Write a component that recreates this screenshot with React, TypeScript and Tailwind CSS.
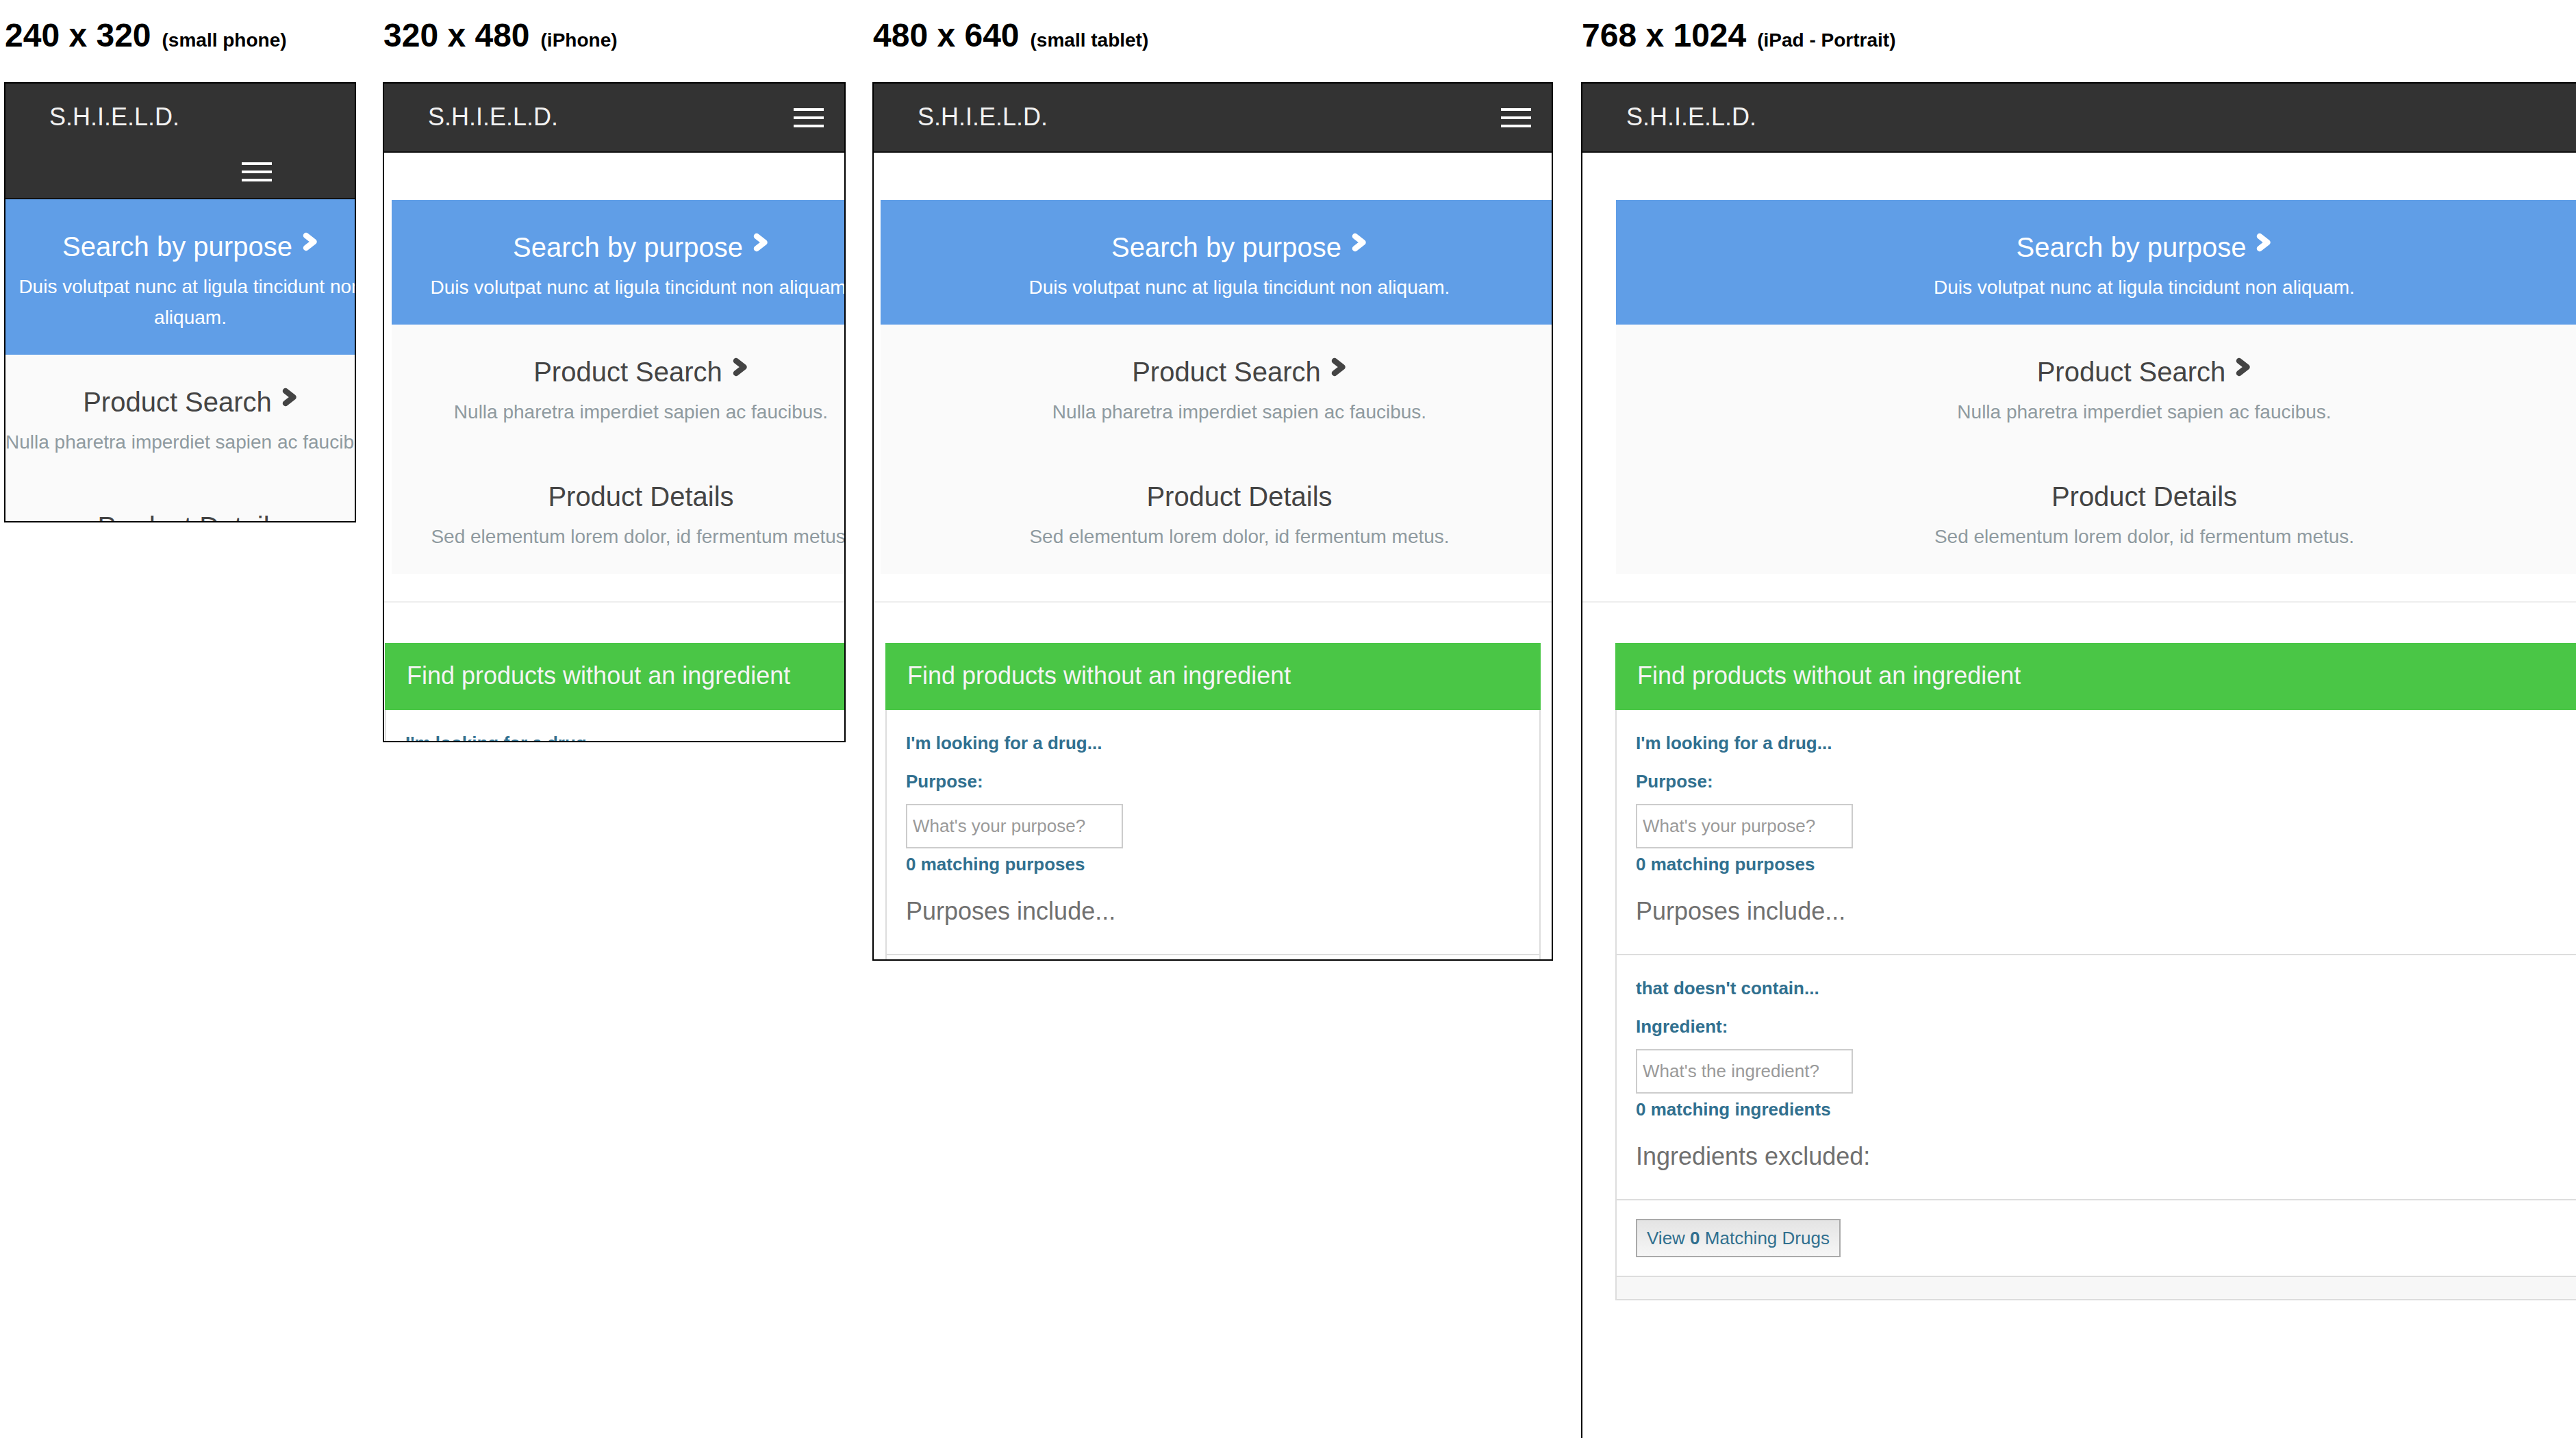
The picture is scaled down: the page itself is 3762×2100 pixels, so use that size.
const frames = [
  {
    title: "240 x 320",
    note: "(small phone)",
    outer: "w-[514px] h-[643px]",
    header: "wrap",
    top: "mt-0",
    block: "ml-0 w-[540px]",
    panel: "ml-0 w-[540px]",
  },
  {
    title: "320 x 480",
    note: "(iPhone)",
    outer: "w-[676px] h-[964px]",
    header: "burger",
    top: "mt-[69px]",
    block: "ml-[11px] w-[728px]",
    panel: "ml-[1px] w-[728px]",
  },
  {
    title: "480 x 640",
    note: "(small tablet)",
    outer: "w-[994px] h-[1283px]",
    header: "burger",
    top: "mt-[69px]",
    block: "ml-[10px] w-[1048px]",
    panel: "ml-[17px] w-[957px]",
  },
  {
    title: "768 x 1024",
    note: "(iPad - Portrait)",
    outer: "w-[1570px] h-[2052px]",
    header: "none",
    top: "mt-[69px]",
    block: "ml-[49px] w-[1543px]",
    panel: "ml-[48px] w-[1543px]",
  },
];

const items = [
  { title: "Product Search", text: "Nulla pharetra imperdiet sapien ac faucibus.", arrow: true },
  { title: "Product Details", text: "Sed elementum lorem dolor, id fermentum metus.", arrow: false },
];

function Chevron({ color }: { color: string }) {
  return (
    <svg width="24" height="30" viewBox="0 0 24 30" fill="none" className="ml-[14px] mt-0 shrink-0">
      <path d="M6 6 L17.5 15 L6 24" stroke={color} strokeWidth="8.5" strokeLinecap="round" strokeLinejoin="round" />
    </svg>
  );
}

function Burger() {
  return (
    <div className="flex w-[44px] flex-col gap-[8px]">
      <span className="h-[4px] bg-white" />
      <span className="h-[4px] bg-white" />
      <span className="h-[4px] bg-white" />
    </div>
  );
}

function Header({ kind }: { kind: string }) {
  return (
    <div className="w-full border-b-2 border-[#111] bg-[#333]">
      <div className="flex h-[99px] items-start justify-between pr-[30px]">
        <span className="pl-[64px] pt-[29px] text-[36px] leading-[40px] text-[#f2f2f2]">S.H.I.E.L.D.</span>
        {kind === "burger" && (
          <div className="mt-[36px]">
            <Burger />
          </div>
        )}
      </div>
      {kind === "wrap" && (
        <div className="h-[68px] pl-[345px] pt-[16px]">
          <Burger />
        </div>
      )}
    </div>
  );
}

function Field({ lead, label, hint, count, list }: { lead: string; label: string; hint: string; count: string; list: string }) {
  return (
    <div className="border-b-2 border-[#ddd] px-[28px] pb-[42px] pt-[33px]">
      <p className="text-[26px] font-bold leading-[30px] text-[#31708f]">{lead}</p>
      <p className="mt-[26px] text-[26px] font-bold leading-[30px] text-[#31708f]">{label}</p>
      <input
        className="mt-[18px] block h-[65px] w-[317px] border-2 border-[#ccc] bg-white px-[8px] text-[26px] placeholder:text-[#9a9a9a]"
        placeholder={hint}
      />
      <p className="mt-[8px] text-[26px] font-bold leading-[30px] text-[#31708f]">{count}</p>
      <p className="mt-[34px] text-[36px] leading-[40px] text-[#707070]">{list}</p>
    </div>
  );
}

function Site({ f }: { f: (typeof frames)[number] }) {
  return (
    <div>
      <Header kind={f.header} />
      <div className={`${f.top} ${f.block} bg-[#609ee7] pb-[32px] pt-[47px] text-center text-white`}>
        <div className="flex h-[44px] items-start justify-center">
          <span className="whitespace-nowrap text-[40px] leading-[44px]">Search by purpose</span>
          <Chevron color="#ffffff" />
        </div>
        <p className="mt-[14px] text-[28px] leading-[45px]">Duis volutpat nunc at ligula tincidunt non aliquam.</p>
      </div>
      <div className={`${f.block} bg-[#fafafa]`}>
        {items.map((it) => (
          <div key={it.title} className="pb-[32px] pt-[47px] text-center">
            <div className="flex h-[44px] items-start justify-center">
              <span className="whitespace-nowrap text-[40px] leading-[44px] text-[#444]">{it.title}</span>
              {it.arrow && <Chevron color="#444444" />}
            </div>
            <p className="mt-[14px] whitespace-nowrap text-[28px] leading-[45px] text-[#8f9aa0]">{it.text}</p>
          </div>
        ))}
      </div>
      <div className="mt-[40px] h-[2px] w-full bg-[#eee]" />
      <div className={`${f.panel} mt-[59px]`}>
        <div className="bg-[#4ac646] pb-[30px] pl-[32px] pt-[28px] text-[36px] leading-[40px] text-[#f4f4f4]">
          Find products without an ingredient
        </div>
        <div className="border-x-2 border-b-2 border-[#ddd]">
          <Field
            lead="I'm looking for a drug..."
            label="Purpose:"
            hint="What's your purpose?"
            count="0 matching purposes"
            list="Purposes include..."
          />
          <Field
            lead="that doesn't contain..."
            label="Ingredient:"
            hint="What's the ingredient?"
            count="0 matching ingredients"
            list="Ingredients excluded:"
          />
          <div className="border-b-2 border-[#ddd] px-[28px] pb-[27px] pt-[27px]">
            <button className="flex h-[56px] items-center border-2 border-[#aaa] bg-linear-to-b from-[#e4e4e4] to-[#f6f6f6] px-[14px] text-[26px] text-[#31708f]">
              View&nbsp;<b>0</b>&nbsp;Matching Drugs
            </button>
          </div>
          <div className="h-[32px] bg-[#f7f7f7]" />
        </div>
      </div>
    </div>
  );
}

export default function App() {
  return (
    <div className="flex h-[2100px] w-[3762px] gap-[39px] overflow-hidden bg-white pl-[6px] font-['Liberation_Sans',Arial,sans-serif]">
      {frames.map((f, i) => (
        <div key={f.title} className={`shrink-0 ${i === 3 ? "ml-[2px]" : ""}`}>
          <div className="flex h-[120px] items-baseline pl-[1px] pt-[26px] leading-[52px] text-black">
            <span className="text-[48px] font-bold">{f.title}</span>
            <span className="ml-[16px] text-[28px] font-bold">{f.note}</span>
          </div>
          <div className={`${f.outer} overflow-hidden border-2 border-black bg-white`}>
            <Site f={f} />
          </div>
        </div>
      ))}
    </div>
  );
}
